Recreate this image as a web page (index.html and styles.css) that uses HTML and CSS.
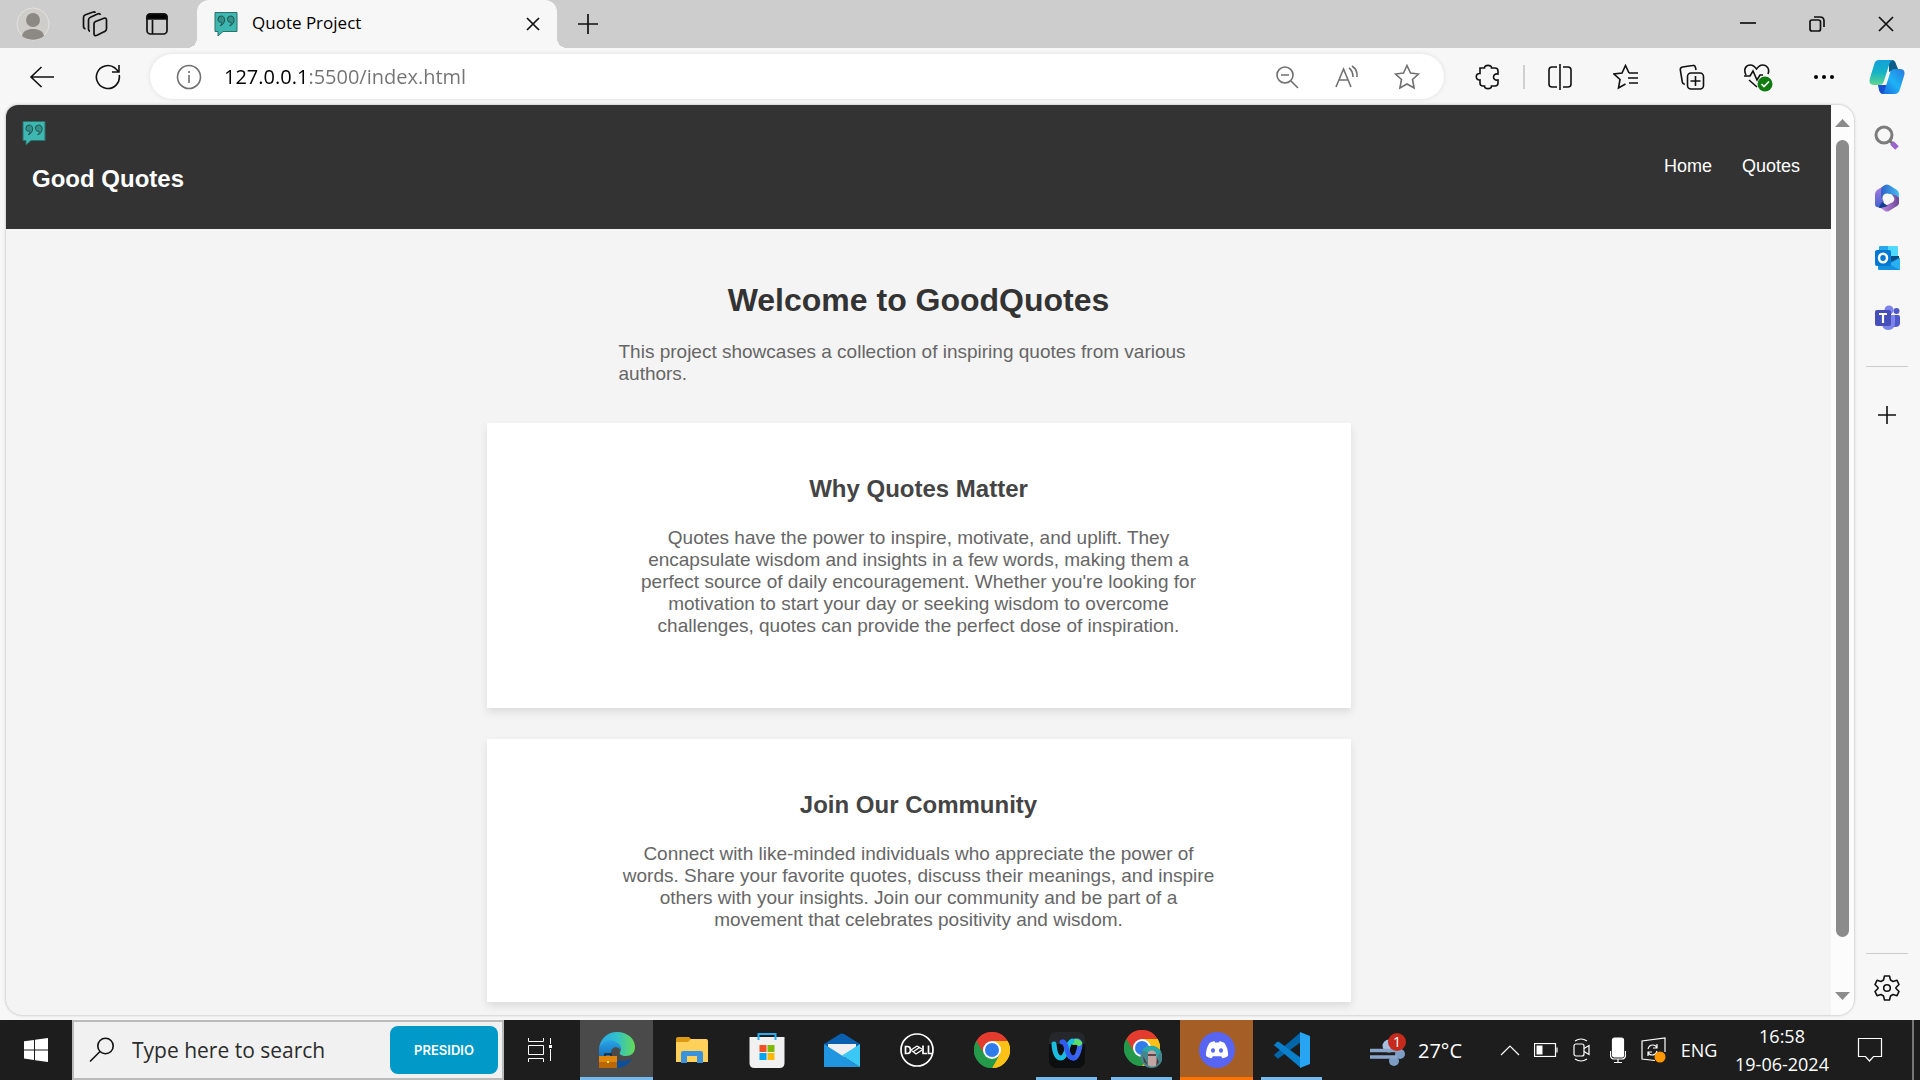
FILE: index.html
```html
<!DOCTYPE html>
<html lang="en">
<head>
<meta charset="utf-8">
<meta name="viewport" content="width=device-width, initial-scale=1">
<title>Quote Project</title>
<link rel="stylesheet" href="styles.css">
</head>
<body>
<svg class="defs" aria-hidden="true">
  <symbol id="quote-logo" viewBox="0 0 24 24">
    <path d="M1 .5h22v19H9L4 24v-4.500H1z" fill="#3db8b0" stroke="#2c6f6b"/>
    <path d="M7 4a3.200 3.200 0 0 0-3 3.300C4 9.200 5 10.200 6.500 10.200c1 0 1.300 0 1.300.8 0 1-.6 1.800-1.600 2.800C9 13 10.600 10.600 10.600 7.800 10.600 5.400 9.200 4 7 4zM16.500 4a3.200 3.200 0 0 0-3 3.300c0 1.900 1 2.900 2.500 2.900 1 0 1.300 0 1.300.8 0 1-.6 1.800-1.600 2.800 2.800-.8 4.400-3.200 4.400-6C20.100 5.400 18.700 4 16.500 4z" fill="#33918b" stroke="#23504e"/>
  </symbol>
  <symbol id="chrome" viewBox="0 0 36 36">
    <path d="M18 18 2.400 9A18 18 0 0 1 33.600 9z" fill="#e33b2e"/>
    <path d="M18 18 33.600 9A18 18 0 0 1 18 36l8-14z" fill="#fbc116"/>
    <path d="M18 18 2.400 9A18 18 0 0 0 18 36l7.800-13.500z" fill="#25994a"/>
    <path d="M18 9h15.600A18 18 0 0 1 18 36l7.800-13.500z" fill="#fbc116"/>
    <path d="M2.400 9A18 18 0 0 1 33.600 9H18a9 9 0 0 0-7.800 13.500z" fill="#e33b2e"/>
    <path d="M2.400 9 10.200 22.500 18 27h5.200L18 36A18 18 0 0 1 2.400 9z" fill="#25994a"/>
    <circle cx="18" cy="18" r="9" fill="#fff"/><circle cx="18" cy="18" r="7" fill="#2f7bea"/>
  </symbol>
</svg>

<div class="tabstrip">
  <button class="strip-btn" aria-label="Profile"><svg width="34" height="34" viewBox="0 0 34 34"><circle cx="17" cy="17" r="16" fill="#cfcdc9" stroke="#e4e2de"/><circle cx="17" cy="13" r="7" fill="#8c8884"/><path d="M6 29c1-5 5-7 11-7s10 2 11 7c-6 5-16 5-22 0z" fill="#8c8884"/></svg></button>
  <button class="strip-btn" aria-label="Workspaces"><svg width="26" height="26" viewBox="0 0 26 26" class="line"><path d="M13.500 10.500 22 7.300q2.500-.8 2.500 2v8.500q0 2-2 2.800l-7.500 3.600q-3 1.300-3-1.500V13q0-1.800 1.500-2.500z"/><path d="M8 20.500q-1.500-.5-1.500-2.500V9q0-2 2-2.800L15.500 3q2.300-.8 3 .8"/><path d="M3.500 18Q1.500 17.500 1.500 15V6.500q0-2 2-2.700L10.500 1.200q2-.8 3 .6"/></svg></button>
  <button class="strip-btn" aria-label="Tab actions"><svg width="24" height="24" viewBox="0 0 24 24" class="line"><rect x="2" y="2" width="20" height="20" rx="3.500"/><path d="M2 7V5q0-3 3-3h14q3 0 3 3v2z" fill="#000"/><path d="M7.500 8v14"/></svg></button>
  <div class="tab">
    <svg width="24" height="24"><use href="#quote-logo"/></svg>
    <span class="tab-title">Quote Project</span>
    <button class="tab-close" aria-label="Close tab"><svg width="14" height="14" viewBox="0 0 14 14" class="line"><path d="M1 1l12 12M13 1 1 13"/></svg></button>
  </div>
  <button class="strip-btn" aria-label="New tab"><svg width="22" height="22" viewBox="0 0 22 22" class="line"><path d="M11 1v20M1 11h20"/></svg></button>
  <div class="window-controls">
    <button class="win-btn" aria-label="Minimize"><svg width="16" height="16" viewBox="0 0 16 16" class="line"><path d="M0 7h16"/></svg></button>
    <button class="win-btn" aria-label="Restore"><svg width="16" height="16" viewBox="0 0 16 16" class="line"><rect x="1" y="4" width="10.500" height="11" rx="2"/><path d="M5 1h6q4 0 4 4v6"/></svg></button>
    <button class="win-btn" aria-label="Close"><svg width="16" height="16" viewBox="0 0 16 16" class="line"><path d="M1 1l14 14M15 1 1 15"/></svg></button>
  </div>
</div>

<div class="toolbar">
  <button class="tool-btn" aria-label="Back"><svg width="26" height="24" viewBox="0 0 26 24" class="line"><path d="M12.500 2 2 12l10.500 10M2 12h23"/></svg></button>
  <button class="tool-btn" aria-label="Refresh"><svg width="26" height="26" viewBox="0 0 26 26" class="line"><path d="M24.200 11A11.500 11.500 0 1 1 20 4l3.500 3.500M24 1v7h-7"/></svg></button>
  <div class="omnibox">
    <svg width="26" height="26" viewBox="0 0 26 26" class="line muted"><circle cx="13" cy="13" r="11.500"/><path d="M13 11v8M13 7v2"/></svg>
    <input class="url" type="text" aria-label="Address" value="127.0.0.1:5500/index.html">
    <button class="omni-btn" aria-label="Zoom out"><svg width="24" height="24" viewBox="0 0 24 24" class="line muted"><circle cx="10" cy="10" r="8"/><path d="M6 10h8M16 16l7 7"/></svg></button>
    <button class="omni-btn" aria-label="Read aloud"><svg width="26" height="24" viewBox="0 0 26 24" class="line muted"><path d="M2 22 9.500 4 17 22M5 15h9M15 3q4 3 4 9M18 1q6 4 5 11"/></svg></button>
    <button class="omni-btn" aria-label="Favorite"><svg width="26" height="26" viewBox="0 0 26 26" class="line muted"><path d="m13 1.500 3.500 7.500 8 1-6 5.500 1.600 8.500L13 20l-7.100 4 1.600-8.500L1.500 10l8-1z"/></svg></button>
  </div>
  <button class="tool-btn" aria-label="Extensions"><svg width="26" height="26" viewBox="0 0 26 26" class="line"><path d="M5 4h4.500C9 .5 17 .5 16.500 4H20q3 0 3 3v3c-6-1-6 7 0 6v3q0 3-3 3h-3.500c.5 3.500-7.500 3.500-7 0H8q-3 0-3-3v-3c-5 .5-5-7 0-6.500z" /></svg></button>
  <span class="tool-divider"></span>
  <button class="tool-btn" aria-label="Split screen"><svg width="26" height="26" viewBox="0 0 26 26" class="line"><path d="M13 0v26M10 3H5Q2 3 2 6v14q0 3 3 3h5M16 3h5q3 0 3 3v14q0 3-3 3h-5"/></svg></button>
  <button class="tool-btn" aria-label="Favorites"><svg width="26" height="26" viewBox="0 0 26 26" class="line"><path d="M16 9 12.500 1.500 9 9l-8 1 6 5.500L5.500 24l7-4M16 9h9M15 14h10M16 19h9"/></svg></button>
  <button class="tool-btn" aria-label="Collections"><svg width="26" height="26" viewBox="0 0 26 26" class="line"><rect x="8.500" y="9" width="16" height="16" rx="3.500"/><path d="M16.500 12v10M11.500 17h10M17 6l-.5-2.500q-.5-2.500-3-2L3.500 3q-2.500.5-2.200 3l2 12q.5 2 2.500 2.500"/></svg></button>
  <button class="tool-btn" aria-label="Browser essentials"><svg width="30" height="30" viewBox="0 0 30 30" class="line"><path d="M3 13C0 7 3 3 7.500 3c3 0 4.500 2 6 4 1.500-2 3-4 6-4C24 3 27 7 25 12M1 14h6l3-5 4 9 3-5h3M6 18l8 7"/><circle cx="22" cy="22" r="7.500" fill="#107c10" stroke="none"/><path d="m18.500 22 2.500 2.500 5-5" stroke="#fff"/></svg></button>
  <button class="tool-btn" aria-label="More"><svg width="22" height="6" viewBox="0 0 22 6"><circle cx="3" cy="3" r="2"/><circle cx="11" cy="3" r="2"/><circle cx="19" cy="3" r="2"/></svg></button>
  <button class="copilot-btn" aria-label="Copilot"><svg width="36" height="34" viewBox="0 0 36 34">
    <defs><linearGradient id="cpa" x1="0" y1="0" x2="0" y2="1"><stop offset="0" stop-color="#14a0dc"/><stop offset=".5" stop-color="#13b3c4"/><stop offset="1" stop-color="#5fd68e"/></linearGradient><linearGradient id="cpb" x1="1" y1="0" x2="0" y2="1"><stop offset="0" stop-color="#2a77dc"/><stop offset=".5" stop-color="#1db3f5"/><stop offset="1" stop-color="#1762dc"/></linearGradient></defs>
    <path d="M20 0h3q3 0 4 4l2 5-9 3z" fill="#0b5c86"/><path d="M9 25h11l-4 9h-2q-3 0-4-4z" fill="#174fd0"/>
    <path d="M10 0h14q-3 1-4 5l-5 16q-1 4-5 4H5q-6 0-4-7L5 5q1-5 5-5z" fill="url(#cpa)"/>
    <path d="M26 9h5q6 0 4 7l-4 13q-1 5-6 5H12q3-1 4-5l5-16q1-4 5-4z" fill="url(#cpb)"/></svg></button>
</div>

<div class="workspace">
  <div class="frame">
    <div class="page">
      <header class="site-header">
        <div class="brand">
          <svg width="24" height="24"><use href="#quote-logo"/></svg>
          <h2 class="brand-name">Good Quotes</h2>
        </div>
        <nav class="site-nav"><a href="#home">Home</a><a href="#quotes">Quotes</a></nav>
      </header>
      <main class="content">
        <h1 class="title">Welcome to GoodQuotes</h1>
        <p class="text intro">This project showcases a collection of inspiring quotes from various authors.</p>
        <section class="card">
          <h3 class="card-title">Why Quotes Matter</h3>
          <p class="text">Quotes have the power to inspire, motivate, and uplift. They encapsulate wisdom and insights in a few words, making them a perfect source of daily encouragement. Whether you're looking for motivation to start your day or seeking wisdom to overcome challenges, quotes can provide the perfect dose of inspiration.</p>
        </section>
        <section class="card">
          <h3 class="card-title">Join Our Community</h3>
          <p class="text">Connect with like-minded individuals who appreciate the power of words. Share your favorite quotes, discuss their meanings, and inspire others with your insights. Join our community and be part of a movement that celebrates positivity and wisdom.</p>
        </section>
      </main>
    </div>
    <div class="scrollbar" aria-hidden="true">
      <svg width="15" height="8" viewBox="0 0 15 8"><path d="M0 8 7.500 0 15 8z" fill="#8b8b8b"/></svg>
      <div class="track"><div class="thumb"></div></div>
      <svg width="15" height="8" viewBox="0 0 15 8"><path d="M0 0h15L7.500 8z" fill="#8b8b8b"/></svg>
    </div>
  </div>
  <aside class="sidebar">
    <button class="side-btn" aria-label="Search"><svg width="26" height="26" viewBox="0 0 26 26" fill="none"><circle cx="10" cy="10" r="8" stroke="#7c7c7c" stroke-width="3"/><path d="m15.500 15.500 3 3" stroke="#777" stroke-width="3"/><path d="m18 18 5 5" stroke="#9a63d0" stroke-width="5"/></svg></button>
    <button class="side-btn" aria-label="Microsoft 365"><svg width="26" height="28" viewBox="0 0 26 28"><defs><linearGradient id="ma" x1="0" y1="0" x2="0" y2="1"><stop offset="0" stop-color="#b57be0"/><stop offset="1" stop-color="#4264cf"/></linearGradient><linearGradient id="mb"><stop offset="0" stop-color="#2d61c8"/><stop offset="1" stop-color="#45bdf0"/></linearGradient><linearGradient id="mc"><stop offset="0" stop-color="#cb93ee"/><stop offset="1" stop-color="#6b4597"/></linearGradient></defs>
      <path d="M11 1 3 6Q1 8 1 10v10q0 4 5 3l4-2-1-14z" fill="url(#ma)"/><path d="M11 1q2-1 4 0l8 5q2 2 2 4v8L17 10l-7 1-3 4V7q0-4 4-6z" fill="url(#mb)"/><path d="M25 14v5q0 2-2 3l-8 5q-2 1-4 0l-6-4q4 1 6-1l8-4q3-3-1-8 5 1 7 4z" fill="url(#mc)"/><path d="M8 18l6 4-7 2q-3 0-2-1z" fill="#153c91"/><circle cx="13" cy="14" r="4.500" fill="#f7f7f7"/></svg></button>
    <button class="side-btn" aria-label="Outlook"><svg width="26" height="26" viewBox="0 0 26 26"><path d="M5 2q0-1 1-1h16q2 0 2 2v12H5z" fill="#28a8ea"/><path d="M14 1h8q2 0 2 2v9H14z" fill="#50d9ff"/><path d="M4 13h22v12H5q-1 0-1-1z" fill="#1490df"/><path d="m26 13-11 6 11 6z" fill="#28b0f0"/><path d="m15 18 10-5v-2H15z" fill="#0a4f85"/><rect x="1" y="5" width="16" height="16" rx="2" fill="#0078d4"/><ellipse cx="9" cy="13" rx="4" ry="4.300" fill="none" stroke="#fff" stroke-width="2.500"/></svg></button>
    <button class="side-btn" aria-label="Teams"><svg width="26" height="26" viewBox="0 0 26 26"><circle cx="15" cy="5" r="4.500" fill="#7b83eb"/><circle cx="22.500" cy="6" r="3" fill="#5059c9"/><path d="M17 10h7q2 0 2 2v6q0 4-5 4h-4z" fill="#5059c9"/><path d="M8 10h13v8q0 7-7 7-6 0-6-7z" fill="#7b83eb"/><rect x="1" y="5" width="16" height="16" rx="2" fill="#464eb8"/><path d="M5 9h8M9 9v9" stroke="#fff" stroke-width="2.200"/></svg></button>
    <span class="side-divider"></span>
    <button class="side-btn" aria-label="Customize"><svg width="20" height="20" viewBox="0 0 20 20" class="line"><path d="M10 1v18M1 10h18"/></svg></button>
    <span class="side-divider side-divider-end"></span>
    <button class="side-btn" aria-label="Settings"><svg width="26" height="28" viewBox="0 0 26 28" class="line"><path d="M10.500 2h5l1 4 2.500 1.500 4-1.200 2 4.200-3 3v1l3 3-2 4.200-4-1.200-2.500 1.500-1 4h-5l-1-4L7 20.500l-4 1.200-2-4.200 3-3v-1l-3-3 2-4.200 4 1.200L9.500 6z" stroke-linejoin="round"/><circle cx="13" cy="14" r="3.300"/></svg></button>
  </aside>
</div>

<footer class="taskbar">
  <button class="start" aria-label="Start"><svg width="24" height="24" viewBox="0 0 24 24" fill="#fff"><path d="M0 3.200 10 2v9.500H0zM11 1.800 24 0v11.500H11zM0 12.500h10V22L0 20.600zM11 12.500h13V24l-13-1.800z"/></svg></button>
  <div class="search">
    <svg width="26" height="26" viewBox="0 0 26 26" class="line"><circle cx="16.500" cy="9" r="7.700"/><path d="M11 14.500 1 24.500"/></svg>
    <input class="search-input" type="text" aria-label="Search" placeholder="Type here to search">
    <button class="presidio">PRESIDIO</button>
  </div>
  <button class="task-view" aria-label="Task view"><svg width="26" height="24" viewBox="0 0 26 24" fill="none" stroke="#fff" stroke-width="1"><path d="M1.500 0v3.500h15V0M1.500 7.500h15v9h-15zM1.500 24v-3.500h15V24M23.500 0v6M23.500 11v12"/><path d="M22 7h3v3h-3z" fill="#fff" stroke="none"/></svg></button>
  <div class="apps">
    <button class="app app-active" aria-label="Edge"><svg width="36" height="36" viewBox="0 0 36 36"><defs><linearGradient id="ea"><stop offset="0" stop-color="#2ba5e4"/><stop offset=".5" stop-color="#30c0cc"/><stop offset="1" stop-color="#65dc54"/></linearGradient><linearGradient id="eb" x1="0" y1="0" x2="0" y2="1"><stop offset="0" stop-color="#2aa4e6"/><stop offset="1" stop-color="#0b56a8"/></linearGradient></defs>
      <path d="M0 17C1 6 9 0 18 0c11 0 18 7 18 15 0 6-4 9-9 9-5 0-7-2-6-4 2-3 1-7-4-9C10 8 3 11 0 17z" fill="url(#ea)"/>
      <path d="M0 17c3-8 11-11 17-7 4 2 6 5 4 8-1-4-9-4-9 3 0 3 1 6 4 9L8 34C2 31-1 25 0 17z" fill="url(#eb)"/>
      <path d="M12 21c0 5 5 8 11 8 4 0 7-1 10-2.500C30 32 25 36 18 36l-6-4z" fill="#0d4f9b"/>
      <path d="M0 24h18v12H0z" fill="#b96805"/><path d="M0 24h18v6H0z" fill="#e0860c"/><path d="M6 24v-2h6v2" fill="none" stroke="#222" stroke-width="1.500"/><path d="M8 29h2v2H8z" fill="#ffe36b"/></svg></button>
    <button class="app" aria-label="File Explorer"><svg width="32" height="28" viewBox="0 0 32 28"><path d="M0 3q0-2 2-2h11l3 3v5H0z" fill="#dc9a14"/><path d="M0 6h12l3-3h15q2 0 2 2v21H0z" fill="#ffd15a"/><path d="M5 27V17q0-2 2-2h18q2 0 2 2v10h-6v-7H11v7z" fill="#3a92dc"/></svg></button>
    <button class="app" aria-label="Microsoft Store"><svg width="36" height="36" viewBox="0 0 36 36"><path d="M.5 5h35v26q0 5-5 5h-25q-5 0-5-5z" fill="#f1f1f2"/><path d="M9.500 8V2h17v6" fill="none" stroke="#28aef0" stroke-width="2"/><path d="M10.500 13h7v7h-7z" fill="#f05022"/><path d="M18.500 13h7v7h-7z" fill="#7fb905"/><path d="M10.500 21h7v7h-7z" fill="#02a4ef"/><path d="M18.500 21h7v7h-7z" fill="#fdb805"/></svg></button>
    <button class="app" aria-label="Mail"><svg width="36" height="34" viewBox="0 0 36 34"><path d="M0 11 16 1q2-1 4 0l16 10v2H0z" fill="#0a5fae"/><path d="M4 11h28v4L18 25 4 15z" fill="#efeff2"/><path d="M0 11 36 34H0z" fill="#2196e0"/><path d="M36 11v23L18 22.500z" fill="#3bc8f5"/></svg></button>
    <button class="app" aria-label="Dell"><svg width="36" height="36" viewBox="0 0 36 36" fill="none" stroke="#fff"><circle cx="18" cy="18" r="16" stroke-width="1.700"/><path d="M6.500 14.500v7h2q3 0 3-3.500t-3-3.500zM24 13.500v8h4M29.500 13.500v8H33" stroke-width="1.700"/><path d="m12 18 6-4M14 20l7-5M17 22l6-4M12 18l5 4M18 14l5 3" stroke-width="1.300"/></svg></button>
    <button class="app" aria-label="Chrome"><svg width="36" height="36"><use href="#chrome"/></svg></button>
    <button class="app app-open" aria-label="Webex"><svg width="36" height="36" viewBox="0 0 36 36" fill="none" stroke-linecap="round"><rect width="36" height="36" rx="7" fill="#0d0e10"/><path d="M0 12V7q0-7 7-7h22q7 0 7 7v5z" fill="#26272a"/><path d="M26 9q5-1 5 4-2 13-7 13-4 0-6-8" stroke="#3b67f4" stroke-width="5"/><path d="M25 10q3-1 5 1" stroke="#5ae069" stroke-width="6"/><path d="M5 12q1 14 7 14 3 0 6-8 2-8 5-9" stroke="#18bde0" stroke-width="5"/><path d="M13 10q3-1 5 8 2 8 6 8" stroke="#315cf0" stroke-width="5"/></svg></button>
    <button class="app app-open" aria-label="Chrome profile"><svg width="40" height="40" viewBox="-2 0 40 40"><use href="#chrome" width="36" height="36"/><circle cx="27.500" cy="27" r="11" fill="#45868c"/><path d="M18 20q9-9 19 1l-4 6-9-4z" fill="#2aa7a8"/><path d="M24 22q5-4 8 1l1 12q-5 3-9 0z" fill="#c3a6a4"/><path d="M24 24h8v2h-8z" fill="#5c474b"/><path d="m19 26 5 9-4-3zM33 28l2 4-3 4z" fill="#55343a"/></svg></button>
    <button class="app app-alert" aria-label="Discord"><svg width="36" height="36" viewBox="0 0 36 36"><circle cx="18" cy="18" r="18" fill="#5865f2"/><path d="M10.500 11q3-2 5-1.800l.8 1.300h3.400l.8-1.300q2 0 5 1.800 4 6 3.500 13-2.500 2-5.500 2.300l-1.400-2.100H13.900l-1.400 2.100Q9.500 26 7 24q-.5-7 3.500-13z" fill="#fff"/><ellipse cx="14" cy="18.500" rx="2" ry="2.300" fill="#5865f2"/><ellipse cx="22" cy="18.500" rx="2" ry="2.300" fill="#5865f2"/></svg></button>
    <button class="app app-open" aria-label="Visual Studio Code"><svg width="36" height="36" viewBox="0 0 36 36"><path d="m0 23 3 3q1 1 2 0L27 10V0L1 22q-1 0-1 1z" fill="#0065a9"/><path d="m0 13 3-3q1-1 2 0l22 16v10L1 14q-1 0-1-1z" fill="#0a80cc"/><path d="M26 0 36 4v28l-10 4z" fill="#27a4f2"/></svg></button>
  </div>
  <div class="tray">
    <button class="weather"><svg width="37" height="36" viewBox="0 0 37 36"><circle cx="20" cy="14" r="6.500" fill="#a9bfe0"/><circle cx="25" cy="29" r="5" fill="#7d9cc4"/><circle cx="31" cy="22" r="5" fill="#7d9cc4"/><path d="M1 18.500h32M1 25h27" stroke="#8aa5c9" stroke-width="3.500"/><circle cx="28" cy="10" r="9" fill="#c42b1c"/><text x="28" y="15" text-anchor="middle" class="badge-text">1</text></svg><span>27°C</span></button>
    <button class="tray-btn" aria-label="Show hidden icons"><svg width="20" height="12" viewBox="0 0 20 12" class="line light thin"><path d="m1 11 9-9 9 9"/></svg></button>
    <button class="tray-btn" aria-label="Battery"><svg width="24" height="14" viewBox="0 0 24 14" class="line light thin"><rect x=".5" y=".5" width="21" height="13"/><path d="M23 4.500v5"/><path d="M2.500 2.500h6v9h-6z" fill="#fff" stroke="none"/></svg></button>
    <button class="tray-btn" aria-label="Meet now"><svg width="18" height="24" viewBox="0 0 18 24" class="line light thin"><rect x="1" y="6" width="10" height="12" rx="2"/><path d="m11 10.500 5-3v9l-5-3M2 3q6-4 12 0M2 21q6 4 12 0"/></svg></button>
    <button class="tray-btn" aria-label="Microphone"><svg width="16" height="26" viewBox="0 0 16 26" class="line light thin"><rect x="2.500" y="1" width="11" height="19" rx="2" fill="#fff"/><path d="M.5 14v4q0 4 4 4h7q4 0 4-4v-4M8 22v3M4 25.500h8"/></svg></button>
    <button class="tray-btn" aria-label="Updates"><svg width="26" height="26" viewBox="0 0 26 26" class="line light thin"><path d="M14 23.500 1 22V4l23-3v14"/><path d="M7 12q1-4 5-4 3 0 4 3M16 7v4h-4M16 14q-1 4-5 4-3 0-4-3M7 19v-4h4"/><circle cx="19" cy="20" r="5.500" fill="#ff9800" stroke="none"/></svg></button>
    <button class="lang">ENG</button>
    <button class="clock"><time>16:58</time><time>19-06-2024</time></button>
    <button class="notify" aria-label="Notifications"><svg width="26" height="26" viewBox="0 0 26 26" class="line light thin"><path d="M1.500 1.500h23v18h-8l-4 4.500-4-4.500h-7z"/></svg></button>
    <span class="desktop-edge"></span>
  </div>
</footer>
</body>
</html>
```
FILE: styles.css
```css
* { box-sizing: border-box; }
body {
  margin: 0;
  min-height: 100vh;
  display: flex;
  flex-direction: column;
  background: #f7f7f7;
  color: #000;
  font-family: "Open Sans", "Noto Sans", sans-serif;
}
button {
  display: flex;
  align-items: center;
  justify-content: center;
  flex: none;
  margin: 0;
  padding: 0;
  border: 0;
  background: none;
  color: inherit;
  font: inherit;
}
svg { flex: none; display: block; }
.defs { position: absolute; width: 0; height: 0; }
.line { fill: none; stroke: #111; stroke-width: 2; }
.tabstrip .line { stroke-width: 1.700; }
.toolbar .line, .sidebar .line { stroke-width: 1.600; }
.toolbar .muted { stroke: #707070; }
.light { stroke: #fff; }
.thin { stroke-width: 1.200; }

/* Tab strip */
.tabstrip { display: flex; align-items: center; height: 48px; padding-left: 2px; background: #cdcdcd; }
.strip-btn { width: 62px; height: 48px; }
.tab {
  position: relative;
  display: flex;
  align-items: center;
  gap: 14px;
  width: 360px;
  height: 48px;
  margin-left: 9px;
  padding: 0 16px 0 17px;
  background: #f7f7f7;
  border-radius: 12px 12px 0 0;
}
.tab::before, .tab::after {
  content: "";
  position: absolute;
  bottom: 0;
  width: 10px;
  height: 10px;
}
.tab::before { right: 100%; background: radial-gradient(circle at 0 0, #cdcdcd 10px, #f7f7f7 10px); }
.tab::after { left: 100%; background: radial-gradient(circle at 100% 0, #cdcdcd 10px, #f7f7f7 10px); }
.tab-title { flex: 1; font-size: 17px; line-height: 22px; padding-bottom: 2px; }
.tab-close { width: 16px; height: 32px; }
.window-controls { display: flex; margin-left: auto; }
.win-btn { width: 69px; height: 48px; }

/* Toolbar */
.toolbar { display: flex; align-items: center; height: 57px; padding: 0 3px 0 9px; }
.tool-btn { width: 66px; height: 48px; }
.copilot-btn { width: 60px; height: 48px; }
.tool-divider { width: 2px; height: 24px; margin: 0 2px; background: #d0d0d0; }
.omnibox {
  display: flex;
  flex: 1;
  align-items: center;
  height: 45px;
  margin: 0 11px 0 9px;
  padding: 0 7px 0 26px;
  background: #fff;
  border-radius: 23px;
  box-shadow: 0 0 5px rgba(0, 0, 0, .1);
}
.url {
  flex: 1;
  min-width: 0;
  margin-left: 22px;
  padding: 0;
  border: 0;
  outline: 0;
  font-family: inherit;
  font-size: 20px;
  color: transparent;
  background: linear-gradient(to right, #000 84px, #737373 84px);
  -webkit-background-clip: text;
  background-clip: text;
}
.omni-btn { width: 60px; height: 40px; }

/* Browser window body */
.workspace { display: flex; flex: 1; padding-left: 6px; }
.frame {
  display: flex;
  flex: 1;
  overflow: hidden;
  margin-bottom: 5px;
  background: #f4f4f4;
  border-radius: 12px 16px 16px 16px;
  box-shadow: 0 0 3px rgba(0, 0, 0, .3);
}
.page { flex: 1; font-family: "Liberation Sans", Arial, sans-serif; }
.site-header {
  display: flex;
  justify-content: space-between;
  height: 124px;
  padding: 16px 31px 0 16px;
  background: #333;
  color: #fff;
}
.brand-name { margin: 20px 0 0 10px; font-size: 24px; line-height: 28px; }
.site-nav { display: flex; gap: 30px; padding-top: 34px; }
.site-nav a { color: #fff; font-size: 18px; line-height: 22px; text-decoration: none; }
.content { display: flex; flex-direction: column; align-items: center; padding-top: 53px; }
.title { margin: 0 0 22px; font-size: 32px; line-height: 37px; color: #333; }
.text { width: 100%; max-width: 600px; margin: 0; font-size: 19px; line-height: 22px; color: #666; text-align: center; }
.intro { margin-bottom: 38px; text-align: left; }
.card {
  display: flex;
  flex-direction: column;
  align-items: center;
  width: 100%;
  max-width: 864px;
  padding: 52px 24px 71px;
  background: #fff;
  box-shadow: 0 4px 8px rgba(0, 0, 0, .1);
}
.card + .card { margin-top: 31px; }
.card-title { margin: 0 0 24px; font-size: 24px; line-height: 28px; color: #444; }
.scrollbar { display: flex; flex-direction: column; align-items: center; gap: 13px; width: 23px; padding: 14px 0 15px; background: #fcfcfc; }
.track { flex: 1; width: 13px; }
.thumb { height: 95%; background: #8b8b8b; border-radius: 7px; }

/* Sidebar */
.sidebar { display: flex; flex-direction: column; align-items: center; width: 66px; padding: 3px 0 2px; }
.side-btn { width: 60px; height: 60px; }
.side-divider { width: 42px; height: 1px; margin: 18px 0; background: #ccc; }
.side-divider-end { margin: auto 0 4px; }

/* Taskbar */
.taskbar { display: flex; height: 60px; background: #1d1d1d; color: #fff; }
.start { width: 72px; }
.search {
  display: flex;
  align-items: center;
  width: 432px;
  padding: 0 4px 0 15px;
  border: 2px solid #bbb;
  background: #f1f1f1;
}
.search-input { flex: 1; min-width: 0; margin-left: 17px; padding: 0; border: 0; outline: 0; background: none; font-family: inherit; font-size: 21px; }
.search-input::placeholder { color: #2b2b2b; opacity: 1; }
.search .line { stroke-width: 1.600; }
.presidio { width: 108px; height: 48px; border-radius: 8px; background: #0099c8; color: #fff; font: 600 13px Inter, sans-serif; }
.task-view { width: 72px; margin-right: 4px; }
.apps { display: flex; gap: 2px; }
.app { width: 73px; position: relative; }
.app-active { background: #4a4a4a; }
.app-alert { background: #a55e26; }
.app-active::after, .app-open::after, .app-alert::after {
  content: "";
  position: absolute;
  right: 0;
  bottom: 0;
  left: 0;
  height: 3px;
  background: #76b9ed;
}
.app-open::after { right: 6px; left: 6px; }
.app-alert::after { background: #ff7300; }
.tray { display: flex; margin-left: auto; font-size: 18px; }
.weather { gap: 12px; margin-right: 30px; font-size: 20px; }
.badge-text { fill: #fff; font-size: 14px; }
.tray-btn { width: 36px; }
.lang { width: 54px; }
.clock { flex-direction: column; gap: 4px; width: 112px; line-height: 24px; }
.notify { width: 64px; }
.desktop-edge { width: 2px; margin: 0 6px 0 10px; background: #777; }
```
